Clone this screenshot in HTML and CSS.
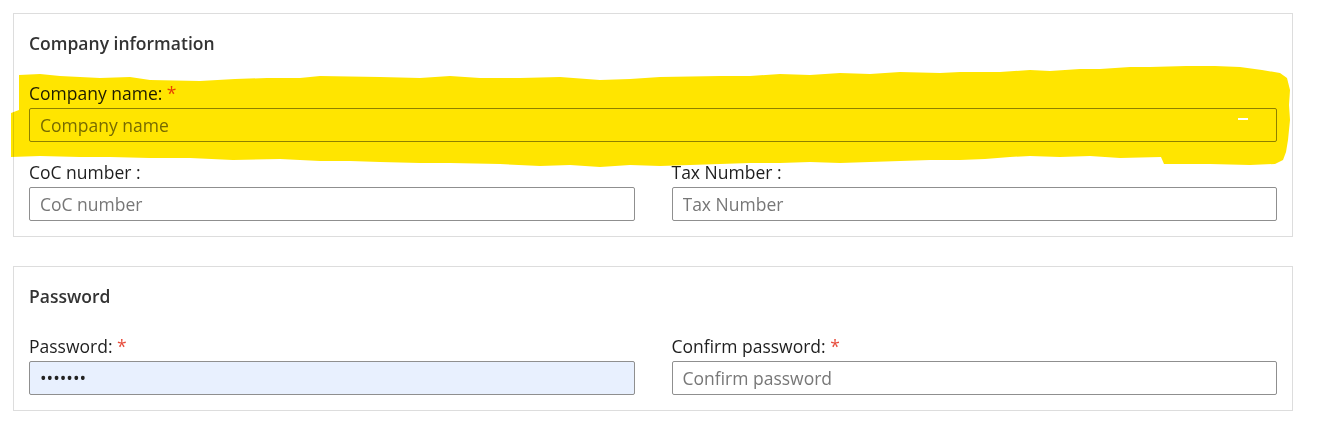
FILE: index.html
```html
<!doctype html>
<html lang="en">
<head>
    <meta charset="UTF-8">
    <meta name="viewport" content="width=device-width, initial-scale=1.0">
    <title>Register</title>
    <link rel="stylesheet" href="styles.css">
</head>
<body>
<div class="page">
    <section class="panel">
        <h3 class="panel-title">Company information</h3>
        <div class="field">
            <label class="field-label">Company name: <span class="req">*</span></label>
            <input class="field-input" type="text" placeholder="Company name">
        </div>
        <div class="row">
            <div class="field">
                <label class="field-label">CoC number :</label>
                <input class="field-input" type="text" placeholder="CoC number">
            </div>
            <div class="field">
                <label class="field-label">Tax Number :</label>
                <input class="field-input" type="text" placeholder="Tax Number">
            </div>
        </div>
    </section>

    <section class="panel">
        <h3 class="panel-title">Password</h3>
        <div class="row">
            <div class="field">
                <label class="field-label">Password: <span class="req">*</span></label>
                <input class="field-input autofilled" type="password" value="secret1">
            </div>
            <div class="field">
                <label class="field-label">Confirm password: <span class="req">*</span></label>
                <input class="field-input" type="password" placeholder="Confirm password">
            </div>
        </div>
    </section>

    <!-- highlighter scribble over the company name field -->
    <svg class="marker" width="1342" height="429" viewBox="0 0 1342 429">
        <path fill="#ffe500" fill-rule="evenodd"
              d="M19,75 L40,74 L60,76 L100,78 L130,77 L150,80 L200,81 L235,79 L267,78 L300,78 L320,76 L380,77 L420,78
                 L450,76 L480,78 L520,78 L560,77 L600,80 L630,79 L660,77 L720,76 L750,76 L780,74 L810,75 L840,73
                 L870,74 L900,72 L940,73 L960,72 L1000,72 L1030,70 L1050,71 L1080,69 L1100,69 L1130,67 L1150,67
                 L1186,66 L1215,66 L1240,67 L1262,70 L1280,73 L1287,78 L1290,90 L1289,105 L1290,120 L1288,140
                 L1286,152 L1283,160 L1275,164 L1250,165 L1210,164 L1164,164 L1161,157 L1120,158 L1090,156 L1060,157
                 L1030,156 L1010,157 L985,159 L960,160 L930,160 L900,161 L870,162 L840,163 L810,162 L780,163 L750,163
                 L720,164 L690,165 L660,166 L630,165 L600,167 L570,165 L540,166 L500,164 L450,163 L420,163 L380,162
                 L350,161 L320,161 L280,159 L233,160 L190,158 L150,158 L110,157 L80,157 L40,156 L11,157 L11,113 L19,110 Z
                 M1238,118 L1248,118 L1248,120 L1238,120 Z"/>
    </svg>
</div>
</body>
</html>
```

FILE: styles.css
```css
*{margin: 0;padding: 0;box-sizing: border-box}
body{background: #fff;font-family: "Open Sans", "Noto Sans", sans-serif;color: #222;}
.page{position: relative;width: 1293px;padding: 13px 0 0 13px;}

.panel{border: 1px solid #ddd;padding: 17px 15px 15px;margin-bottom: 29px;}
.panel-title{font-size: 17.5px;line-height: 25px;font-weight: 600;color: #333;margin-bottom: 26px;}

.row{display: grid;grid-template-columns: 1fr 1fr;column-gap: 37px;}
.field{margin-bottom: 19px;}
.panel .row:last-child .field,
.panel > .field:last-child{margin-bottom: 0;}

.field-label{display: block;font-size: 17.5px;line-height: 22px;margin-bottom: 4px;color: #1e1e1e;}
.req{color: #e74c3c;}

.field-input{
    display: block;
    width: 100%;
    height: 34px;
    padding: 0 10px;
    border: 1px solid #8f8f8f;
    border-radius: 2px;
    background: #fff;
    font-family: "Open Sans", "Noto Sans", sans-serif;
    font-size: 17.5px;
    color: #222;
    outline: none;
}
.field-input::placeholder{color: #777;}
.field-input.autofilled{background: #e8f0fe;}

.marker{position: absolute;left: 0;top: 0;pointer-events: none;mix-blend-mode: multiply;}
```
